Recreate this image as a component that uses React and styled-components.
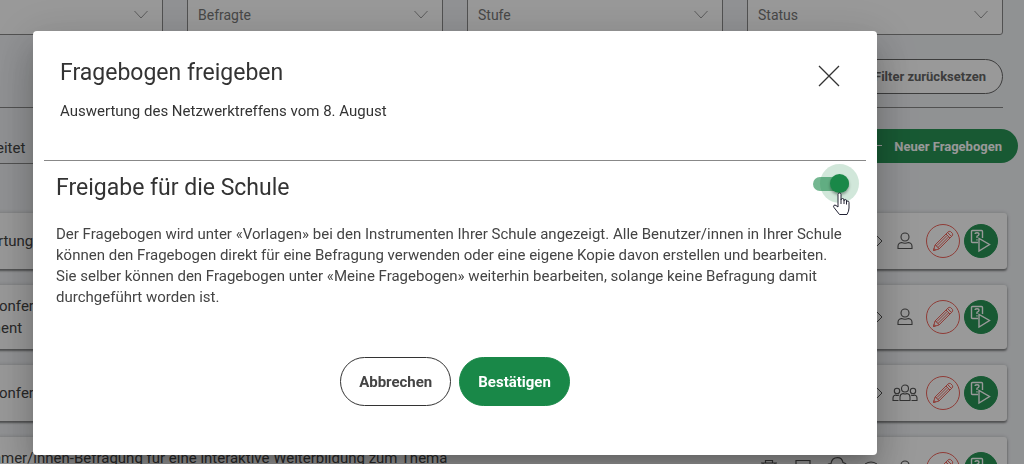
import React, { useState } from "react";
import styled, { createGlobalStyle } from "styled-components";

const Global = createGlobalStyle`
  *, *::before, *::after { box-sizing: border-box; }
  html, body, #root { height: 100%; }
  body {
    margin: 0;
    overflow: hidden;
    background: #f1f3f6;
    font-family: Roboto, "Liberation Sans", sans-serif;
    font-size: 15px;
    color: #333;
  }
  h2, p { margin: 0; font-weight: 400; }
  button, select { font-family: inherit; }
`;

const Page = styled.div`
  height: 100%;
  overflow: hidden;
`;

const Content = styled.main`
  display: flex;
  flex-direction: column;
  margin: -5px 21px 0 -93px;
`;

const Filters = styled.div`
  display: grid;
  grid-template-columns: repeat(4, 1fr);
  gap: 24px;
`;

const SelectBox = styled.div`
  position: relative;
  display: flex;
  color: #999;
  svg {
    position: absolute;
    right: 15px;
    top: 15px;
    pointer-events: none;
  }
`;

const Select = styled.select`
  appearance: none;
  width: 100%;
  height: 40px;
  padding: 0 10px;
  border: 1px solid #888;
  border-radius: 3px;
  background: #fff;
  color: #777;
  font-size: 14px;
`;

const FilterActions = styled.div`
  display: flex;
  justify-content: flex-end;
  padding: 24px 0 13px;
  border-bottom: 1px solid #888;
`;

const ResetButton = styled.button`
  height: 35px;
  padding: 0 16px;
  border: 1px solid #666;
  border-radius: 18px;
  background: #fff;
  color: #666;
  font-size: 13px;
  font-weight: 700;
`;

const ListBar = styled.div`
  display: flex;
  align-items: center;
  justify-content: space-between;
  margin: 20px -15px 0 0;
`;

const SortSelect = styled.select`
  appearance: none;
  width: 240px;
  height: 36px;
  padding: 4px 0 0 50px;
  border: 0;
  border-bottom: 1px solid #888;
  background: transparent;
  color: #444;
  font-size: 15px;
`;

const NewButton = styled.button`
  display: flex;
  align-items: center;
  gap: 12px;
  height: 34px;
  padding: 0 16px;
  border: 0;
  border-radius: 18px;
  background: #289556;
  color: #fff;
  font-size: 13px;
  font-weight: 700;
`;

const Cards = styled.div`
  display: flex;
  flex-direction: column;
  gap: 16px;
  margin: 49px -4px 0 0;
`;

const Card = styled.article`
  display: flex;
  align-items: center;
  justify-content: space-between;
  min-height: 56px;
  padding: 10px 9px 10px 46px;
  border-radius: 3px;
  background: #fff;
  box-shadow: 0 2px 2px rgba(0, 0, 0, 0.4), 0 0 4px rgba(0, 0, 0, 0.2);
`;

const CardTitle = styled.p`
  line-height: 22px;
  white-space: pre-line;
  color: #444;
`;

const Actions = styled.div`
  display: flex;
  align-items: center;
  gap: 4px;
`;

const Slot = styled.span`
  display: flex;
  justify-content: center;
  width: 30px;
  padding-left: 4px;
  color: #555;
`;

const People = styled(Slot)`
  width: 34px;
  padding: 0;
`;

const RoundButton = styled.button`
  display: flex;
  align-items: center;
  justify-content: center;
  width: 34px;
  height: 34px;
  padding: 0;
  border: 1px solid ${(p) => (p.$filled ? "#289556" : "#f0655c")};
  border-radius: 50%;
  background: ${(p) => (p.$filled ? "#289556" : "transparent")};
  color: ${(p) => (p.$filled ? "#fff" : "#f0655c")};
`;

const Overlay = styled.div`
  position: fixed;
  inset: 0;
  display: flex;
  align-items: flex-start;
  padding: 31px 147px 0 33px;
  background: rgba(0, 0, 0, 0.4);
`;

const Dialog = styled.section`
  flex: 1;
  padding: 0 11px 49px;
  border-radius: 4px;
  background: #fff;
  box-shadow: 0 11px 15px -7px rgba(0, 0, 0, 0.2),
    0 24px 38px 3px rgba(0, 0, 0, 0.14), 0 9px 46px 8px rgba(0, 0, 0, 0.12);
`;

const DialogHeader = styled.header`
  display: flex;
  justify-content: space-between;
  align-items: flex-start;
  padding: 26px 26px 38px 16px;
  border-bottom: 1px solid #888;
`;

const Title = styled.h2`
  font-size: 23px;
  line-height: 32px;
`;

const Subtitle = styled.p`
  padding-top: 11px;
  line-height: 22px;
`;

const CloseButton = styled.button`
  display: flex;
  margin-top: 8px;
  padding: 0;
  border: 0;
  background: none;
  color: #333;
`;

const DialogBody = styled.div`
  padding: 11px 12px 0;
`;

const ShareRow = styled.div`
  display: flex;
  justify-content: space-between;
  align-items: center;
`;

const ShareLabel = styled.label`
  font-size: 23px;
  line-height: 32px;
`;

const Toggle = styled.span`
  position: relative;
  display: flex;
  width: 36px;
  height: 14px;
  margin: 0 5px 8px 0;
`;

const Switch = styled.input`
  appearance: none;
  width: 36px;
  height: 14px;
  margin: 0;
  border-radius: 7px;
  background: #bbb;
  &::before {
    content: "";
    position: absolute;
    top: -3px;
    left: 0;
    width: 19px;
    height: 19px;
    border-radius: 50%;
    background: #fafafa;
    box-shadow: 0 0 0 10px rgba(0, 0, 0, 0.1), 0 2px 3px rgba(0, 0, 0, 0.4);
  }
  &:checked { background: #74b791; }
  &:checked::before {
    left: 17px;
    background: #198848;
    box-shadow: 0 0 0 10px rgba(25, 136, 72, 0.2), 0 2px 3px rgba(0, 0, 0, 0.4);
  }
`;

const Pointer = styled.svg`
  position: absolute;
  left: 19px;
  top: 15px;
  pointer-events: none;
`;

const Description = styled.p`
  margin-top: 20px;
  padding-right: 8px;
  line-height: 21px;
  color: #444;
`;

const DialogActions = styled.footer`
  display: flex;
  justify-content: center;
  gap: 8px;
  margin-top: 49px;
`;

const PillButton = styled.button`
  height: 49px;
  padding: 0 18px;
  border: 1px solid ${(p) => (p.$primary ? "#198848" : "#333")};
  border-radius: 25px;
  background: ${(p) => (p.$primary ? "#198848" : "#fff")};
  color: ${(p) => (p.$primary ? "#fff" : "#444")};
  font-size: 15px;
  font-weight: 700;
`;

const Chevron = () => (
  <svg width="14" height="10" viewBox="0 0 14 10" fill="none" stroke="currentColor">
    <path d="M0.5 1 7 8 13.5 1" />
  </svg>
);

const PlusIcon = () => (
  <svg width="12" height="12" viewBox="0 0 12 12" fill="none" stroke="currentColor">
    <path d="M0 5.5H12M5.5 0V12" />
  </svg>
);

const PencilIcon = () => (
  <svg width="22" height="22" viewBox="0 0 22 22" fill="none" stroke="currentColor" strokeLinejoin="round">
    <path d="M1.5 20.5 3 15 16 2Q17 1 18.5 1.5L20.5 3.5Q21 5 20 6L7 19Z" />
    <path d="M3 15 4.5 15.5 5 17 6.5 17.5 7 19M14 4 18 8M15.5 2.5 19.5 6.5M5 15.5 15 5.5M6.5 17 16.5 7M1.5 20.5 3.5 20 2 18.5Z" />
  </svg>
);

const SurveyIcon = () => (
  <svg width="22" height="24" viewBox="0 0 22 24" fill="none" stroke="currentColor" strokeWidth="1.4">
    <path d="M8 13.5H2.5Q1.5 13.5 1.5 12.5V2.5Q1.5 1.5 2.5 1.5H11.5Q12.5 1.5 12.5 2.5V9" />
    <path d="M5 5Q5 3.7 7 3.7T9 5.3Q9 6.5 7 7.3V9M7 10.3V11.5" />
    <path d="M9 9.5V22L19.5 15.5Z" />
  </svg>
);

const PersonIcon = () => (
  <svg width="16" height="18" viewBox="0 0 16 18" fill="none" stroke="currentColor" strokeWidth="1.1">
    <circle cx="8" cy="5" r="4" />
    <path d="M1 16.5V14.5Q1 11 4.5 10.5Q8 12 11.5 10.5Q15 11 15 14.5V16.5Z" />
  </svg>
);

const GroupIcon = () => (
  <svg width="26" height="18" viewBox="0 0 26 18" fill="none" stroke="currentColor" strokeWidth="1.1">
    <circle cx="13" cy="4.5" r="3.5" />
    <circle cx="5" cy="7" r="2.7" />
    <circle cx="21" cy="7" r="2.7" />
    <path d="M8 16.5V13Q8 10 11 9.5Q13 10.5 15 9.5Q18 10 18 13V16.5Z" />
    <path d="M6.5 16.5H1V14Q1 11.5 3.5 11Q5 12 7 11M19.5 16.5H25V14Q25 11.5 22.5 11Q21 12 19 11" />
  </svg>
);

const EyeIcon = () => (
  <svg width="24" height="16" viewBox="0 0 24 16" fill="none" stroke="currentColor">
    <path d="M1 8 6 3Q12 -1 18 3L23 8 18 13Q12 17 6 13Z" />
    <circle cx="12" cy="8" r="3" />
  </svg>
);

const TrashIcon = () => (
  <svg width="18" height="20" viewBox="0 0 18 20" fill="none" stroke="currentColor" strokeWidth="1.2">
    <path d="M1 4H17M5.5 4V1.5H12.5V4M3 4 4 19H14L15 4M7 7V16M11 7V16" />
  </svg>
);

const CommentIcon = () => (
  <svg width="16" height="20" viewBox="0 0 16 20" fill="none" stroke="currentColor" strokeWidth="1.2">
    <path d="M1 1.5H15V13H8L4 17V13H1Z" />
  </svg>
);

const CloudIcon = () => (
  <svg width="22" height="24" viewBox="0 0 22 24" fill="none" stroke="currentColor" strokeWidth="1.2">
    <path d="M6 15H5Q1 14 1 10Q1 6.5 5 6.5Q6 0.6 11.5 0.6Q16 0.6 17 5.5Q21 6.5 21 10Q21 14 17 15H16M11 9V21M8 18 11 21 14 18" />
  </svg>
);

const rows = [
  { title: "Auswertung" },
  { title: "Elternkonferenz\nStatement" },
  { title: "Elternkonferenz", group: true },
  {
    title: "Teilnehmer/innen-Befragung für eine interaktive Weiterbildung zum Thema\nUnterricht",
    tools: true,
  },
];

export default function App() {
  const [shared, setShared] = useState(true);
  return (
    <Page>
      <Global />
      <Content>
        <Filters>
          {["Thema", "Befragte", "Stufe", "Status"].map((name) => (
            <SelectBox key={name}>
              <Select aria-label={name}>
                <option>{name}</option>
              </Select>
              <Chevron />
            </SelectBox>
          ))}
        </Filters>
        <FilterActions>
          <ResetButton>Filter zurücksetzen</ResetButton>
        </FilterActions>
        <ListBar>
          <SortSelect aria-label="Sortierung">
            <option>Bearbeitet</option>
          </SortSelect>
          <NewButton>
            <PlusIcon />
            Neuer Fragebogen
          </NewButton>
        </ListBar>
        <Cards>
          {rows.map((row, i) => (
            <Card key={i}>
              <CardTitle>{row.title}</CardTitle>
              <Actions>
                {row.tools && (
                  <>
                    <Slot><TrashIcon /></Slot>
                    <Slot><CommentIcon /></Slot>
                    <Slot><CloudIcon /></Slot>
                  </>
                )}
                <Slot><EyeIcon /></Slot>
                <People>{row.group ? <GroupIcon /> : <PersonIcon />}</People>
                <RoundButton aria-label="Bearbeiten"><PencilIcon /></RoundButton>
                <RoundButton $filled aria-label="Befragung starten"><SurveyIcon /></RoundButton>
              </Actions>
            </Card>
          ))}
        </Cards>
      </Content>
      <Overlay>
        <Dialog role="dialog" aria-modal="true" aria-labelledby="dialog-title">
          <DialogHeader>
            <div>
              <Title id="dialog-title">Fragebogen freigeben</Title>
              <Subtitle>Auswertung des Netzwerktreffens vom 8. August</Subtitle>
            </div>
            <CloseButton aria-label="Schliessen">
              <svg width="22" height="22" viewBox="0 0 22 22" stroke="currentColor" strokeWidth="1.3">
                <path d="M1 1 21 21M21 1 1 21" />
              </svg>
            </CloseButton>
          </DialogHeader>
          <DialogBody>
            <ShareRow>
              <ShareLabel htmlFor="share">Freigabe für die Schule</ShareLabel>
              <Toggle>
                <Switch
                  id="share"
                  type="checkbox"
                  role="switch"
                  checked={shared}
                  onChange={(e) => setShared(e.target.checked)}
                />
                <Pointer width="18" height="24" viewBox="0 0 18 24" fill="#fff" stroke="#223" strokeLinejoin="round">
                  <path d="M6 15V2.5Q6 1 7.5 1T9 2.5V8Q9 6.5 10.5 6.5T12 8V9Q12 7.5 13.3 7.5T14.5 9V10Q15 8.8 16 9T17 10.5V16Q17 19 15 22.5H7.5L2 15.5Q1 14 2 13.3Q3 12.8 4 13.5Z" />
                  <path d="M9 8V12M12 9V12M14.5 10V12.5" />
                </Pointer>
              </Toggle>
            </ShareRow>
            <Description>
              Der Fragebogen wird unter «Vorlagen» bei den Instrumenten Ihrer Schule angezeigt. Alle Benutzer/innen in
              Ihrer Schule können den Fragebogen direkt für eine Befragung verwenden oder eine eigene Kopie davon
              erstellen und bearbeiten. Sie selber können den Fragebogen unter «Meine Fragebogen» weiterhin bearbeiten,
              solange keine Befragung damit durchgeführt worden ist.
            </Description>
            <DialogActions>
              <PillButton>Abbrechen</PillButton>
              <PillButton $primary>Bestätigen</PillButton>
            </DialogActions>
          </DialogBody>
        </Dialog>
      </Overlay>
    </Page>
  );
}
